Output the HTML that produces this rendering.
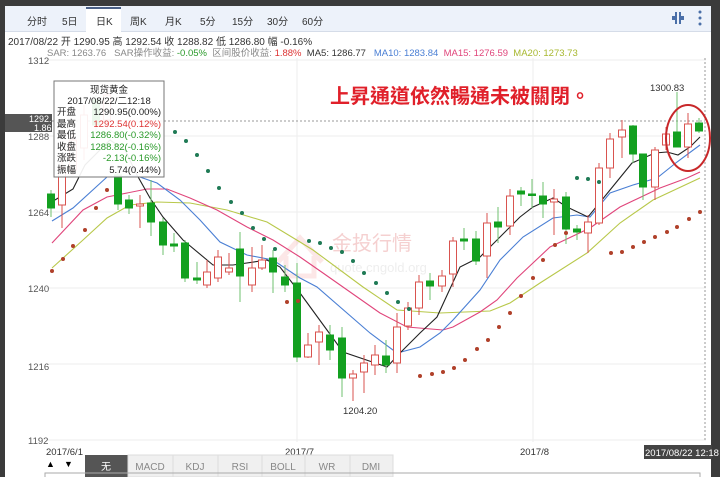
<!DOCTYPE html>
<html><head><meta charset="utf-8"><style>
body{margin:0;width:720px;height:477px;overflow:hidden;background:#3b3b3b;font-family:"Liberation Sans","Noto Sans CJK SC",sans-serif;}
.p{position:absolute;left:5px;top:6px;width:706px;height:471px;background:#fff;}
.bar{position:absolute;left:5px;top:6px;width:706px;height:25px;background:#edf2fa;border-bottom:1px solid #d5dce8;}
.t{position:absolute;top:13px;font-size:10px;color:#333;}
.sel{position:absolute;left:86px;top:7px;width:35px;height:25px;background:#fff;border-top:2px solid #4a5f86;}
.tx{position:absolute;font-size:9.5px;white-space:nowrap;color:#333;}
</style></head><body>
<div class="p"></div>
<div class="bar"></div>
<div class="sel"></div>
<div class="t" style="left:27px">分时</div>
<div class="t" style="left:62px">5日</div>
<div class="t" style="left:96px">日K</div>
<div class="t" style="left:130px">周K</div>
<div class="t" style="left:165px">月K</div>
<div class="t" style="left:200px">5分</div>
<div class="t" style="left:232px">15分</div>
<div class="t" style="left:267px">30分</div>
<div class="t" style="left:302px">60分</div>
<div class="tx" style="left:8px;top:33px;font-size:10px">2017/08/22 开 1290.95 高 1292.54 收 1288.82 低 1286.80 幅 -0.16%</div>
<div class="tx" style="left:47px;top:45px;color:#888">SAR: 1263.76 &nbsp; SAR操作收益: <span style="color:#2a9a2a">-0.05%</span> &nbsp;区间股价收益: <span style="color:#d33">1.88%</span> &nbsp;<span style="color:#333">MA5: 1286.77</span> &nbsp; <span style="color:#4a7fd4">MA10: 1283.84</span> &nbsp;<span style="color:#e0457b">MA15: 1276.59</span> &nbsp;<span style="color:#a8b830">MA20: 1273.73</span></div>
<svg width="720" height="477" style="position:absolute;left:0;top:0" font-family="Liberation Sans, sans-serif">
<g stroke="#4a6fa8" stroke-width="2" fill="none"><path d="M676 12v5h-4M680 12v5h4M676 24v-5h-4M680 24v-5h4"/></g>
<g fill="#4a6fa8"><circle cx="700" cy="12" r="1.5"/><circle cx="700" cy="18" r="1.5"/><circle cx="700" cy="24" r="1.5"/></g>
<g stroke="#eee" stroke-width="1"><path d="M46 60H706M46 136H706M46 212H706M46 288H706M46 364H706M46 440H706M297 58V442M533 58V442"/></g>
<path d="M705 58V442" stroke="#999" stroke-dasharray="2,2"/>
<path d="M52 121H705" stroke="#999" stroke-dasharray="2,2"/>
<g font-size="9.5" fill="#555"><text x="28" y="64">1312</text><text x="28" y="140">1288</text><text x="28" y="216">1264</text><text x="28" y="292">1240</text><text x="28" y="370">1216</text><text x="28" y="444">1192</text>
<text x="46" y="455" fill="#333">2017/6/1</text><text x="285" y="455" fill="#333">2017/7</text><text x="520" y="455" fill="#333">2017/8</text></g>
<rect x="644" y="445" width="68" height="14" fill="#444"/><text x="645" y="456" font-size="9.5" fill="#fff">2017/08/22 12:18</text>
<g opacity="0.2" fill="none" stroke="#e88"><path d="M278 262l22-24 22 24M286 256v20h28v-20" stroke-width="5"/></g>
<text x="332" y="250" font-size="20" fill="#f5d0d0" font-family="Noto Sans CJK SC">金投行情</text>
<text x="330" y="272" font-size="13" fill="#eee">quote.cngold.org</text>
<g fill="none" stroke-width="1.1">
<polyline stroke="#b8c84a" points="52,268 83,240 107,218 130,205 157,202 190,203 227,210 267,222 300,242 313,250 363,287 397,310 440,313 490,311 510,303 540,283 587,253 620,223 653,200 700,178"/>
<polyline stroke="#e0457b" points="52,243 83,210 107,197 147,189 167,189 190,198 217,210 247,227 273,240 300,257 323,273 380,313 407,327 443,330 453,327 480,312 497,300 517,278 550,247 590,228 620,207 660,188 687,178 700,172"/>
<polyline stroke="#4a7fd4" points="52,221 73,208 107,177 137,176 157,183 180,200 200,220 220,242 247,255 273,260 300,278 317,287 370,333 397,353 420,347 440,333 453,320 480,290 500,260 523,237 553,218 577,215 590,217 610,193 633,185 657,178 677,162 700,145"/>
<polyline stroke="#222" points="50,203 73,189 85,165 110,140 125,150 137,175 150,198 163,217 183,240 213,265 233,265 267,260 280,267 300,293 343,352 387,367 400,353 420,333 437,317 460,267 480,257 490,247 510,227 520,217 533,207 553,198 567,207 588,217 610,190 632,163 655,153 667,152 678,155 690,147 700,137"/>
</g>
</svg>
<svg width="720" height="477" style="position:absolute;left:0;top:0">
<g id="cs"></g>
</svg>
<script>
var C=[[51,'g',194,208,190,217],[62,'r',168,205,160,228],[73,'r',140,170,130,175],[84,'r',115,148,105,160],[96,'g',100,125,95,135],[107,'r',95,120,88,130],[118,'g',175,204,165,210],[129,'g',200,208,195,214],[140,'r',204,206,195,228],[151,'g',203,222,180,236],[163,'g',222,245,218,255],[174,'g',244,246,233,252],[185,'g',243,278,240,282],[197,'g',278,280,262,284],[207,'r',272,285,260,288],[218,'r',257,278,250,282],[229,'r',268,272,253,275],[240,'g',249,276,232,302],[252,'r',268,285,247,292],[262,'r',260,268,245,270],[273,'g',258,272,250,293],[285,'g',277,285,265,292],[297,'g',283,357,263,362],[308,'r',345,357,333,358],[319,'r',332,342,325,365],[330,'g',335,350,325,360],[342,'g',338,378,327,397],[353,'r',374,378,370,401],[364,'r',363,372,355,393],[375,'r',355,365,345,375],[386,'g',356,365,340,373],[397,'r',327,363,313,373],[408,'r',308,326,302,330],[419,'r',282,308,275,315],[430,'g',281,286,273,300],[442,'r',276,286,270,292],[453,'r',241,274,237,287],[464,'g',239,241,228,250],[476,'g',239,261,231,265],[487,'r',223,256,213,278],[498,'g',222,227,207,243],[510,'r',196,226,189,235],[521,'g',191,194,187,206],[532,'g',194,195,179,208],[543,'g',196,204,182,218],[554,'r',199,202,189,235],[566,'g',197,229,192,244],[577,'g',229,232,225,240],[588,'r',222,233,215,253],[599,'r',168,223,163,225],[610,'r',139,168,133,178],[622,'r',130,137,120,158],[633,'g',126,154,125,163],[643,'g',154,187,154,200],[655,'r',150,187,147,200],[666,'r',134,145,127,150],[677,'g',132,147,92,147],[688,'r',124,147,113,158],[699,'g',123,131,118,133]];
var s='';
C.forEach(function(c){var col=c[1]=='g'?'#13a020':'#d9534f';var h=Math.max(c[3]-c[2],1.5);
s+='<line x1="'+c[0]+'" x2="'+c[0]+'" y1="'+c[4]+'" y2="'+c[5]+'" stroke="'+(c[1]=='g'?'#6fc06f':'#d9534f')+'"/>';
s+='<rect x="'+(c[0]-3.5)+'" y="'+c[2]+'" width="7" height="'+h+'" fill="'+(c[1]=='g'?col:'#fff')+'" stroke="'+col+'"/>';});
var G=[[175,132],[186,141],[197,155],[208,171],[219,188],[231,202],[242,213],[253,228],[264,239],[275,249],[309,241],[320,243],[331,248],[342,252],[353,261],[364,273],[376,283],[387,293],[398,302],[409,309],[577,178],[588,179],[599,182]];
G.forEach(function(p){s+='<circle cx="'+p[0]+'" cy="'+p[1]+'" r="2" fill="#1f7a55"/>';});
var B=[[52,271],[63,259],[73,246],[85,230],[96,208],[107,190],[287,302],[298,301],[420,376],[432,374],[443,372],[454,368],[465,360],[477,349],[488,340],[499,327],[510,313],[521,296],[533,278],[543,260],[555,245],[566,233],[611,253],[622,252],[633,247],[644,242],[655,237],[667,232],[677,227],[689,219],[700,212]];
B.forEach(function(p){s+='<circle cx="'+p[0]+'" cy="'+p[1]+'" r="2" fill="#b0402a"/>';});
document.getElementById('cs').innerHTML=s;
</script>
<svg width="720" height="477" style="position:absolute;left:0;top:0" font-family="Liberation Sans, sans-serif">
<rect x="54" y="81" width="110" height="96" fill="#fff" fill-opacity="0.92" stroke="#777"/>
<g font-size="9.5" fill="#222">
<text x="109" y="93" text-anchor="middle" font-family="Noto Sans CJK SC">现货黄金</text>
<text x="109" y="104" text-anchor="middle">2017/08/22/二12:18</text>
<g font-family="Noto Sans CJK SC"><text x="57" y="115">开盘</text><text x="57" y="127">最高</text><text x="57" y="138">最低</text><text x="57" y="150">收盘</text><text x="57" y="161">涨跌</text><text x="57" y="173">振幅</text></g>
<g text-anchor="end"><text x="161" y="115">1290.95(0.00%)</text><text x="161" y="127" fill="#d33">1292.54(0.12%)</text><text x="161" y="138" fill="#2a9a2a">1286.80(-0.32%)</text><text x="161" y="150" fill="#2a9a2a">1288.82(-0.16%)</text><text x="161" y="161" fill="#2a9a2a">-2.13(-0.16%)</text><text x="161" y="173">5.74(0.44%)</text></g>
</g>
<rect x="5" y="114" width="47" height="18" fill="#555"/><text x="29" y="122" font-size="9" fill="#fff">1292.</text><text x="34" y="131" font-size="9" fill="#fff">1.86</text>
<text x="330" y="103" font-size="20" fill="#e0202a" font-weight="bold" font-family="Noto Sans CJK TC">上昇通道依然暢通未被關閉。</text>
<ellipse cx="688" cy="138" rx="22" ry="33" fill="none" stroke="#c8282a" stroke-width="2"/>
<text x="650" y="91" font-size="9.5" fill="#333">1300.83</text>
<text x="343" y="414" font-size="9.5" fill="#333">1204.20</text>
<text x="46" y="467" font-size="9">▲</text><text x="64" y="467" font-size="9">▼</text>
<rect x="85" y="455" width="43" height="22" fill="#555"/>
<g fill="#f0f0f0" stroke="#ddd"><rect x="128" y="455" width="45" height="22"/><rect x="173" y="455" width="45" height="22"/><rect x="218" y="455" width="44" height="22"/><rect x="262" y="455" width="43" height="22"/><rect x="305" y="455" width="45" height="22"/><rect x="350" y="455" width="43" height="22"/></g>
<g font-size="10" fill="#888" text-anchor="middle"><text x="106" y="470" fill="#fff" font-family="Noto Sans CJK SC">无</text><text x="150" y="470">MACD</text><text x="195" y="470">KDJ</text><text x="240" y="470">RSI</text><text x="283" y="470">BOLL</text><text x="327" y="470">WR</text><text x="371" y="470">DMI</text></g>
<path d="M45 477V473H393M393 473H700V477" stroke="#aaa" fill="none"/>
</svg>
</body></html>
